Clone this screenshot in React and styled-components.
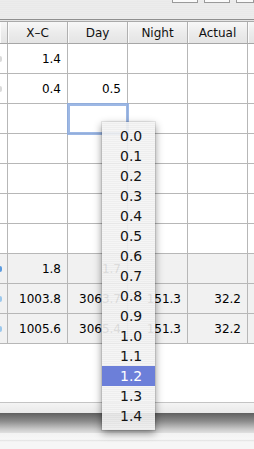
import React from "react";
import styled, { createGlobalStyle, css } from "styled-components";

const Global = createGlobalStyle`
  html, body { margin: 0; padding: 0; background: #fff; }
  body { width: 254px; height: 449px; overflow: hidden; font-family: "DejaVu Sans", "Liberation Sans", sans-serif; }
`;

const Window = styled.div`
  position: relative;
  width: 254px;
  height: 449px;
  display: flex;
  flex-direction: column;
  overflow: hidden;
`;

const TopBar = styled.div`
  height: 19px;
  flex: none;
  display: flex;
  justify-content: flex-end;
  align-items: flex-start;
  gap: 6px;
  background: repeating-linear-gradient(#ececec 0 1px, #e9e9e9 1px 2px);
`;

const ToolButton = styled.div`
  width: ${(p) => p.$w}px;
  height: 2px;
  background: #fafafa;
  border: 1px solid #9a9a9a;
  border-top: none;
`;

const Rule = styled.div`
  height: 3px;
  flex: none;
  background: linear-gradient(#8f8f8f 0 1px, #e4e4e4 1px 2px, #a9a9a9 2px 3px);
`;

const Grid = styled.div`
  display: grid;
  grid-template-columns: 8px 60px 60px 60px 60px 6px;
  flex: none;
`;

const HeadCell = styled.div`
  height: 21px;
  border-bottom: 1px solid #a6a6a6;
  border-right: 1px solid #b0b0b0;
  box-shadow: inset 1px 0 0 #fbfbfb;
  background: linear-gradient(#f7f7f7, #ececec 50%, #e4e4e4);
  display: flex;
  align-items: center;
  justify-content: center;
  font-size: 12px;
  color: #111;
  overflow: hidden;
  white-space: nowrap;
  ${(p) => p.$last && css`border-right: none;`}
`;

const Cell = styled.div`
  height: 29px;
  border-bottom: 1px solid #b7b7b7;
  border-right: 1px solid #b7b7b7;
  background: ${(p) => (p.$sum ? "#f1f1f1" : "#ffffff")};
  display: flex;
  align-items: center;
  justify-content: flex-end;
  padding-right: 6px;
  font-size: 12px;
  color: #000;
  overflow: hidden;
  white-space: nowrap;
  ${(p) => p.$edge && css`justify-content: flex-start; padding-right: 0;`}
  ${(p) => p.$last && css`border-right: none; padding-right: 0;`}
  ${(p) =>
    p.$focus &&
    css`
      outline: 3px solid rgba(140, 172, 224, 0.85);
      outline-offset: -2px;
      position: relative;
      z-index: 1;
    `}
`;

const EdgeMark = styled.span`
  display: block;
  width: 2px;
  height: 6px;
  margin-top: 1px;
  border-radius: 0 2px 2px 0;
  background: ${(p) => p.$c};
`;

const EmptyArea = styled.div`
  flex: 1;
  background: #fff;
`;

const BottomBar = styled.div`
  height: 47px;
  flex: none;
  display: flex;
  flex-direction: column;
`;

const BarLine = styled.div`
  height: 1px;
  background: #c4c4c4;
`;
const BarLight = styled.div`
  height: 10px;
  background: linear-gradient(#f4f4f4, #e9e9e9);
`;
const BarShadow = styled.div`
  height: 20px;
  background: linear-gradient(#5f5f5f, #8a8a8a 40%, #c8c8c8 80%, #e0e0e0);
`;
const BarFoot = styled.div`
  flex: 1;
  background: linear-gradient(#f2f2f2, #f7f7f7 40%, #e3e3e3 45%, #f6f6f6 55%);
`;

const Popup = styled.div`
  position: absolute;
  left: 102px;
  top: 122px;
  width: 53px;
  padding: 4px 0;
  background: repeating-linear-gradient(rgba(244, 244, 244, 0.9) 0 1px, rgba(236, 236, 236, 0.9) 1px 2px);
  box-shadow: 0 3px 8px rgba(0, 0, 0, 0.45), 0 0 0 1px rgba(0, 0, 0, 0.08);
  z-index: 5;
`;

const Item = styled.div`
  height: 20px;
  display: flex;
  align-items: center;
  padding-left: 18px;
  font-size: 14px;
  color: ${(p) => (p.$sel ? "#ffffff" : "#141414")};
  background: ${(p) => (p.$sel ? "#6c7fd9" : "transparent")};
`;

const headers = ["", "X\u2013C", "Day", "Night", "Actual", ""];

const rows = [
  { v: ["1.4", "", "", ""], mark: "#dadada" },
  { v: ["0.4", "0.5", "", ""], mark: "#dadada" },
  { v: ["", "", "", ""], focus: 1 },
  { v: ["", "", "", ""] },
  { v: ["", "", "", ""] },
  { v: ["", "", "", ""] },
  { v: ["", "", "", ""] },
  { v: ["1.8", "1.7", "", ""], sum: true, mark: "#5b9be0" },
  { v: ["1003.8", "3063.7", "151.3", "32.2"], sum: true, mark: "#9cc8ec" },
  { v: ["1005.6", "3065.4", "151.3", "32.2"], sum: true, mark: "#9cc8ec" },
];

const items = [];
for (let i = 0; i <= 14; i++) items.push((i / 10).toFixed(1));

export default function App() {
  return (
    <Window>
      <Global />
      <TopBar>
        <ToolButton $w={24} />
        <ToolButton $w={24} />
        <ToolButton $w={16} />
      </TopBar>
      <Rule />
      <Grid>
        {headers.map((h, i) => (
          <HeadCell key={i} $last={i === 5}>
            {h}
          </HeadCell>
        ))}
        {rows.map((r, ri) => (
          <React.Fragment key={ri}>
            <Cell $sum={r.sum} $edge>
              {r.mark ? <EdgeMark $c={r.mark} /> : null}
            </Cell>
            {r.v.map((t, ci) => (
              <Cell key={ci} $sum={r.sum} $focus={r.focus === ci}>
                {t}
              </Cell>
            ))}
            <Cell $sum={r.sum} $last />
          </React.Fragment>
        ))}
      </Grid>
      <EmptyArea />
      <BottomBar>
        <BarLine />
        <BarLight />
        <BarShadow />
        <BarFoot />
      </BottomBar>
      <Popup>
        {items.map((t) => (
          <Item key={t} $sel={t === "1.2"}>
            {t}
          </Item>
        ))}
      </Popup>
    </Window>
  );
}
